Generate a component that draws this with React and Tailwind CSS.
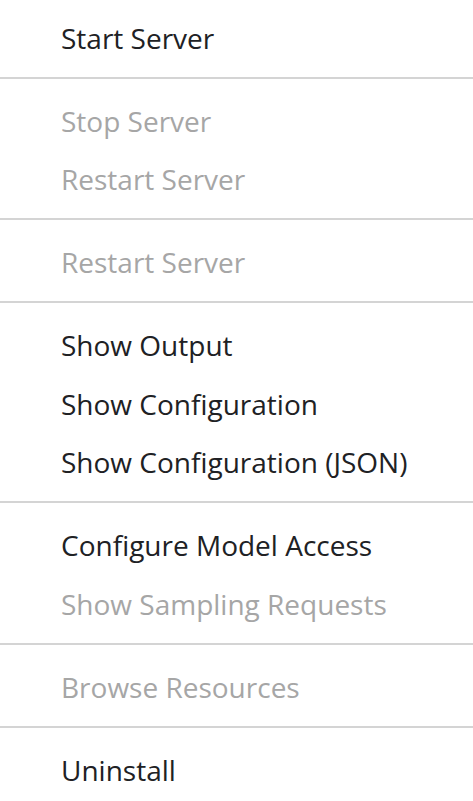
import React from "react";

const groups = [
  [{ t: "Start Server" }],
  [{ t: "Stop Server", d: true }, { t: "Restart Server", d: true }],
  [{ t: "Restart Server", d: true }],
  [{ t: "Show Output" }, { t: "Show Configuration" }, { t: "Show Configuration (JSON)" }],
  [{ t: "Configure Model Access" }, { t: "Show Sampling Requests", d: true }],
  [{ t: "Browse Resources", d: true }],
  [{ t: "Uninstall" }],
];

export default function App() {
  return (
    <div
      className="w-[473px] h-[801px] bg-white overflow-hidden pt-[7px]"
      style={{ fontFamily: '"Open Sans", "Noto Sans", sans-serif' }}
    >
      {groups.map((g, gi) => (
        <React.Fragment key={gi}>
          {gi > 0 && (
            <div className="h-[24.5px] flex items-center">
              <div className="h-[2px] w-full bg-[#d4d4d4]" />
            </div>
          )}
          {g.map((it, ii) => (
            <div
              key={ii}
              className={`h-[58.5px] flex items-center pl-[61px] pt-[3px] text-[28px] leading-none whitespace-nowrap ${
                it.d ? "text-[#a6a6a6]" : "text-[#202124]"
              }`}
            >
              {it.t}
            </div>
          ))}
        </React.Fragment>
      ))}
    </div>
  );
}
